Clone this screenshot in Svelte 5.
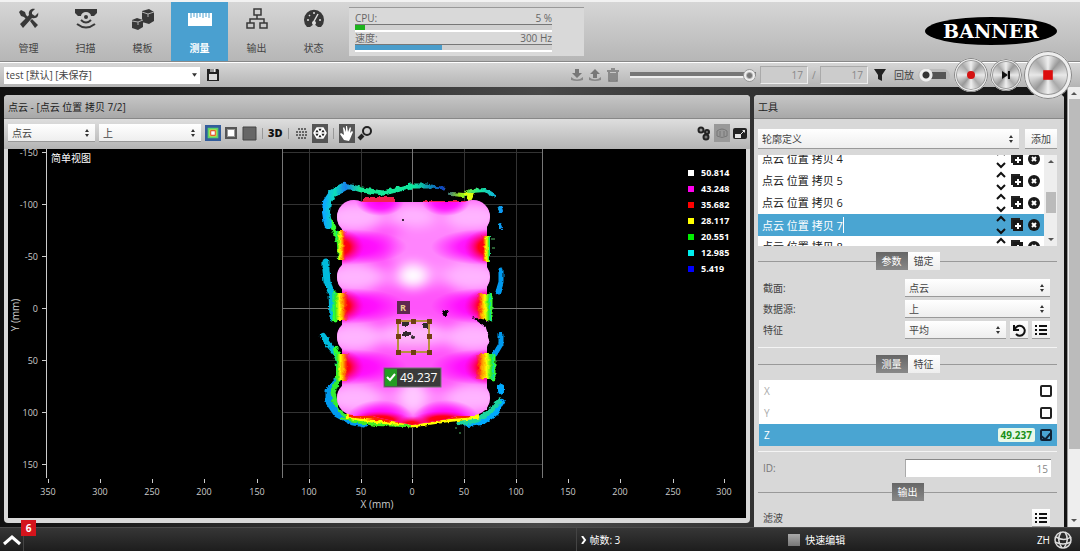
<script>
  const pages = ['管理', '扫描', '模板', '测量', '输出', '状态'];
  const tools = [4, 5, 6, 7, 8];
  const yTicks = [
    [152, '-150'], [204, '-100'], [256, '-50'], [308, '0'], [360, '50'], [412, '100'], [464, '150']
  ];
  const xTicks = [
    [48, '350'], [100, '300'], [152, '250'], [204, '200'], [257, '150'], [309, '100'], [361, '50'],
    [412, '0'], [464, '50'], [516, '100'], [568, '150'], [620, '200'], [673, '250'], [724, '300']
  ];
  const legend = [
    ['#ffffff', '50.814'], ['#f0e', '43.248'], ['#f00', '35.682'], ['#ff0', '28.117'],
    ['#0e0', '20.551'], ['#0ee', '12.985'], ['#00f', '5.419']
  ];
  const lobes = [217, 277, 337, 398];
  const notches = [[247, 18], [306, 18], [367, 18]];
  const handles = [[398, 321], [413, 321], [429, 321], [398, 336], [429, 336], [398, 352], [413, 352], [429, 352]];
  const axes = [['X', false], ['Y', false], ['Z', true]];
</script>

{#snippet pick(label, options, cls)}
  <span class="pick {cls}">
    <select aria-label={label}>
      {#each options as o}<option>{o}</option>{/each}
    </select>
    <svg viewBox="0 0 6 10" width="6" height="10" aria-hidden="true"><path d="M3 1l2 3H1zM3 9l2-3H1z" fill="#333" /></svg>
  </span>
{/snippet}

{#snippet listIcon()}
  <svg viewBox="0 0 14 14" width="14" height="14"><path d="M1 3h2M5 3h8M1 7h2M5 7h8M1 11h2M5 11h8" stroke="#111" stroke-width="2" /></svg>
{/snippet}

<div class="app">
  <header>
    <nav>
      {#each pages as p, i}
        <button class="page" class:active={i === 3}>
          <svg viewBox="0 0 24 24" width="24" height="24" fill="#383838">
            {#if i === 0}
              <path d="M4 3l4 2 1 3 4 4-2 2-4-4-3-1-2-4zM13 14l2-2 6 6-3 3z" />
              <path d="M21 6l-3 3-3-2 0-2 3-3c-4-1-7 2-6 6l-9 9 3 4 9-10c5 1 7-2 6-6z" />
            {:else if i === 1}
              <path d="M1 2h22v4l-3 3h-3a5 4 0 0 0-10 0H4L1 6z" />
              <circle cx="12" cy="10" r="2" />
              <path d="M7 13q5 5 10 0M3 17q9 7 18 0" fill="none" stroke="#383838" stroke-width="2" />
            {:else if i === 2}
              <path d="M11 4l7-2 5 3v9l-5 3-7-2zM1 13l5-2 6 2v7l-5 3-6-2z" />
              <path d="M11 5l6 2 6-2M17 7v3M1 14l6 1 5-2M7 15v3" fill="none" stroke="#b0b0b0" />
            {:else if i === 3}
              <path d="M0 6h24v13H0z" fill="#fff" />
              <path d="M3 6v5M6 6v4M9 6v5M12 6v4M15 6v5M18 6v4M21 6v5" stroke="#4aa0d0" />
            {:else if i === 4}
              <path d="M9 2h7v6H9zM2 16h7v5H2zM15 16h7v5h-7zM12 8v4M5 16v-4h14v4" fill="none" stroke="#383838" stroke-width="1.500" />
            {:else}
              <path d="M5 20a10 10 0 1 1 14 0l-3 0-4-3-4 3z" />
              <path d="M11 16l5-9M5 13h2M7 8l1 1M12 5v2M17 13h2" stroke="#ddd" stroke-width="1.500" />
              <circle cx="12" cy="16" r="2" fill="#ddd" />
            {/if}
          </svg>
          <span>{p}</span>
        </button>
      {/each}
    </nav>
    <div class="stats">
      <div class="stat"><span>CPU:</span><span>5 %</span></div>
      <div class="bar"><i class="green" style="width: 5%"></i></div>
      <div class="stat"><span>速度:</span><span>300 Hz</span></div>
      <div class="bar"><i class="blue" style="width: 44%"></i></div>
    </div>
    <svg class="logo" viewBox="0 0 132 30" width="132" height="30">
      <ellipse cx="66" cy="15" rx="66" ry="14" fill="#000" />
      <text x="66" y="22" text-anchor="middle" fill="#fff">BANNER</text>
    </svg>
  </header>

  <div class="toolbar">
    <span class="job">
      <select aria-label="作业"><option>test [默认] [未保存]</option></select>
      <svg viewBox="0 0 6 4" width="5" height="4" aria-hidden="true"><path d="M0 0h6l-3 4z" fill="#333" /></svg>
    </span>
    <button class="icon" aria-label="保存">
      <svg viewBox="0 0 14 14" width="14" height="14"><path d="M1 1h11l1 1v11H1z" fill="#222" /><path d="M3 6h8v6H3z" fill="#ddd" /><path d="M4 1h6v3H4z" fill="#999" /><path d="M8 1h1v3H8z" fill="#eee" /></svg>
    </button>
    <div class="playback">
      <button class="icon" aria-label="下载"><svg viewBox="0 0 14 14" width="14" height="14"><path d="M5 1h4v4h3L7 10 2 5h3z" fill="#777" /><path d="M1 9q6 5 12 0v3q-6 2-12 0z" fill="#888" /></svg></button>
      <button class="icon" aria-label="上传"><svg viewBox="0 0 14 14" width="14" height="14"><path d="M5 10h4V6h3L7 1 2 6h3z" fill="#777" /><path d="M1 9q6 5 12 0v3q-6 2-12 0z" fill="#888" /></svg></button>
      <button class="icon" aria-label="删除"><svg viewBox="0 0 14 14" width="14" height="14"><path d="M1 3h12M5 1h4M3 4v9h8V4M5 5v7M7 5v7M9 5v7" fill="none" stroke="#777" stroke-width="1.500" /></svg></button>
      <input class="seek" type="range" aria-label="帧" max="17" value="17" />
      <input class="num" aria-label="当前帧" value="17" /><span class="slash">/</span><input class="num" aria-label="总帧数" value="17" />
      <button class="icon filter" aria-label="过滤"><svg viewBox="0 0 14 14" width="14" height="14"><path d="M1 1h12L9 7v6l-4-2V7z" fill="#222" /></svg></button>
      <label class="replay">回放 <input type="checkbox" /></label>
      <button class="round" aria-label="录制"><svg viewBox="0 0 10 10" width="10" height="10"><circle cx="5" cy="5" r="4" fill="#d41212" /></svg></button>
      <button class="round small" aria-label="单步"><svg viewBox="0 0 10 10" width="10" height="10"><path d="M1 1l6 4-6 4zM7 1h2v8H7z" fill="#111" /></svg></button>
      <button class="round big" aria-label="停止"><svg viewBox="0 0 10 10" width="10" height="10"><path d="M1 1h8v8H1z" fill="#dc0d0d" /></svg></button>
    </div>
  </div>

  <main>
    <section class="panel view">
      <h2>点云 - [点云 位置 拷贝 7/2]</h2>
      <div class="viewbar">
        {@render pick('数据', ['点云'], 'data')}
        {@render pick('源', ['上'], 'source')}
        <div class="modes">
          <button class="icon" aria-label="热图"><svg viewBox="0 0 18 18" width="16" height="16"><path d="M0 0h18v18H0z" fill="#335d9c" /><path d="M3 3h12v12H3z" fill="#5bd36a" /><path d="M5 5h8v8H5z" fill="#f2df3a" /><path d="M6 6h6v6H6z" fill="#db3b2c" /><path d="M7 7h4v4H7z" fill="#fff" /></svg></button>
          <button class="icon" aria-label="灰度"><svg viewBox="0 0 16 16" width="16" height="16"><path d="M2 2h12v12H2z" fill="#555" /><path d="M4 4h8v8H4z" fill="#999" /><path d="M5 5h6v6H5z" fill="#fff" /></svg></button>
          <button class="icon" aria-label="均匀"><svg viewBox="0 0 16 16" width="16" height="16"><path d="M2 2h13v13H2z" fill="#666" stroke="#444" /></svg></button>
        </div>
        <i class="sep"></i>
        <button class="three">3D</button>
        <i class="sep"></i>
        <button class="icon" aria-label="点"><svg viewBox="0 0 16 16" width="16" height="16"><path d="M4 4h8M2 7h12M2 10h12M4 13h8" stroke="#444" stroke-width="1.500" stroke-dasharray="2 1" /></svg></button>
        <button class="icon on" aria-label="网格"><svg viewBox="0 0 16 16" width="16" height="16"><path d="M5 3h6l3 5-3 5H5L2 8zM5 3l6 10M11 3L5 13M2 8h12" fill="#222" stroke="#fff" stroke-width="1.500" /></svg></button>
        <i class="sep"></i>
        <button class="icon on" aria-label="平移"><svg viewBox="0 0 16 16" width="16" height="16"><path d="M5 15L1 9l1-1 3 2-1-7 1-1 2 5V1h1l1 6 2-5 1 1-1 5 2-2 1 1-3 7-1 2z" fill="#fff" /></svg></button>
        <button class="icon" aria-label="缩放"><svg viewBox="0 0 16 16" width="16" height="16"><circle cx="10" cy="6" r="4" fill="none" stroke="#222" stroke-width="2" /><path d="M6 10l-4 4" stroke="#222" stroke-width="4" /></svg></button>
        <div class="right">
          <button class="icon" aria-label="设置"><svg viewBox="0 0 16 16" width="16" height="16"><circle cx="5" cy="5" r="2.500" fill="#999" stroke="#222" stroke-width="2" /><circle cx="11" cy="7" r="2" fill="#777" stroke="#222" stroke-width="2" /><circle cx="10" cy="12" r="2.500" fill="#777" stroke="#222" stroke-width="2" /></svg></button>
          <button class="icon dim" aria-label="区域"><svg viewBox="0 0 16 16" width="16" height="16"><path d="M3 6q5-4 10 0v5q-5 3-10 0zM6 6v5M10 6v5" fill="none" stroke="#777" /></svg></button>
          <button class="icon" aria-label="窗口"><svg viewBox="0 0 16 16" width="16" height="16"><rect x="1" y="3" width="14" height="11" rx="2" fill="#222" /><path d="M3 9h6v4H3zM10 5h3v3z" fill="#e4e4e4" /><path d="M9 9l4-4" stroke="#e4e4e4" /></svg></button>
        </div>
      </div>
      <svg class="plot" viewBox="8 149 738 369" role="img" aria-label="简单视图">
        <defs>
          <filter id="soft" x="-50%" y="-50%" width="200%" height="200%"><feGaussianBlur stdDeviation="6" /></filter>
          <filter id="edge" x="-10%" y="-10%" width="120%" height="120%">
            <feTurbulence type="fractalNoise" baseFrequency="0.25" numOctaves="2" seed="4" />
            <feDisplacementMap in="SourceGraphic" scale="4" xChannelSelector="R" yChannelSelector="G" />
          </filter>
          <linearGradient id="bandL"><stop offset="0" stop-color="#0ad8c0" /><stop offset=".15" stop-color="#3e2" /><stop offset=".4" stop-color="#ff0" /><stop offset=".65" stop-color="#f80" /><stop offset="1" stop-color="#f00" stop-opacity="0" /></linearGradient>
          <linearGradient id="bandR" x1="1" x2="0"><stop offset="0" stop-color="#0ad8c0" /><stop offset=".15" stop-color="#3e2" /><stop offset=".4" stop-color="#ff0" /><stop offset=".65" stop-color="#f80" /><stop offset="1" stop-color="#f00" stop-opacity="0" /></linearGradient>
          <linearGradient id="halo" gradientUnits="userSpaceOnUse" x1="324" x2="504" y1="0" y2="0"><stop offset="0" stop-color="#08a8ff" /><stop offset=".06" stop-color="#0de0b8" /><stop offset=".12" stop-color="#1680f0" /><stop offset=".2" stop-color="#18e890" /><stop offset=".5" stop-color="#10e8a0" /><stop offset=".66" stop-color="#1040c0" /><stop offset=".76" stop-color="#a0f010" /><stop offset=".87" stop-color="#18e8a0" /><stop offset="1" stop-color="#0a90ff" /></linearGradient>
          <radialGradient id="red"><stop offset="0" stop-color="#f00" /><stop offset=".45" stop-color="#f00" stop-opacity=".9" /><stop offset="1" stop-color="#f0a" stop-opacity="0" /></radialGradient>
          <radialGradient id="mag"><stop offset="0" stop-color="#f0e" /><stop offset=".5" stop-color="#f0f" stop-opacity=".8" /><stop offset="1" stop-color="#f0f" stop-opacity="0" /></radialGradient>
          <clipPath id="body">
            <rect x="353" y="202" width="122" height="214" />
            <path d="M342 225h145v185H342zM345 408L380 418l32 7 35-6 32-10z" />
            {#each lobes as y}<circle cx="354" cy={y} r="17" /><circle cx="473" cy={y} r="17" />{/each}
          </clipPath>
        </defs>
        <rect x="8" y="149" width="738" height="369" fill="#000" />
        <g stroke="#333" fill="none" shape-rendering="crispEdges">
          <path d="M309.500 149V478M361.500 149V478M464.500 149V478M516.500 149V478M282 152.500H543M282 204.500H543M282 256.500H543M282 360.500H543M282 412.500H543M282 464.500H543" />
          <path d="M282.500 149V478M542.500 149V478M412.500 149V478M282 308.500H543" stroke="#777" />
        </g>

        <g fill="none" stroke-linecap="round" stroke-linejoin="round" filter="url(#edge)">
          <path d="M338 240L334 229L328 218" stroke="#3f3" stroke-width="5" />
          <path d="M328 225L326 212L327 202L333 193L344 187" stroke="url(#halo)" stroke-width="8" />
          <path d="M341 187L352 187L362 190L383 193L400 189L411 186L428 186" stroke="url(#halo)" stroke-width="5" />
          <path d="M430 187L444 188" stroke="url(#halo)" stroke-width="3" />
          <path d="M451 194L464 195L471 191L485 190L495 196M500 208l1 3M500 225l1 2" stroke="url(#halo)" stroke-width="4" />
          <path d="M326 262V270L327 282L332 294L333 318" stroke="#0bd" stroke-width="7" />
          <path d="M335 294V320" stroke="#3f3" stroke-width="5" />
          <path d="M323 336L330 346L338 356" stroke="#0bd" stroke-width="6" />
          <path d="M336 350L339 362V378" stroke="#3f3" stroke-width="6" />
          <path d="M501 270L501 282L498 292" stroke="#09e" stroke-width="5" />
          <path d="M501 335L501 344L495 354" stroke="#09e" stroke-width="5" />
          <path d="M493 356V378M490 296V318" stroke="#3f3" stroke-width="5" />
          <path d="M336 382L329 391V402L337 414L350 421L364 424" stroke="#09e" stroke-width="7" />
          <path d="M338 380L333 392L335 402L344 414L358 421L400 424" stroke="#3e3" stroke-width="5" />
          <path d="M501 387v4M502 402L494 414L482 422L468 424" stroke="#0af" stroke-width="6" />
          <path d="M499 401L490 412L477 420L460 423" stroke="#1ed6a0" stroke-width="5" />
        </g>
        <g filter="url(#edge)">
          <path d="M363 197h32v8h-32zM423 201h46v5h-46z" fill="#f02050" />
          <path d="M463 193h12l-4 8h-3l-1-6h-4z" fill="#df1" />
          <path d="M338 383V408L352 418L412 428L470 419L488 408V383" fill="#000" />
          <path d="M346 416L380 420L412 424L445 419L479 415" fill="none" stroke="#ff0" stroke-width="7" />
          <path d="M350 414L380 417L412 421L445 416L470 414" fill="none" stroke="#f20" stroke-width="7" />
          <path d="M340 418L375 425L410 426" fill="none" stroke="#4e2" stroke-width="2" />
        </g>
        <g clip-path="url(#body)">
          <rect x="330" y="195" width="170" height="235" fill="#ff54fa" />
          <g filter="url(#soft)" fill="#ffb4ff">
            {#each lobes as y}
              <ellipse cx="354" cy={y} rx="28" ry="15" /><ellipse cx="473" cy={y} rx="28" ry="15" />
              <ellipse cx="413" cy={y} rx="50" ry="10" opacity=".6" />
            {/each}
            <ellipse cx="430" cy="250" rx="42" ry="26" opacity=".5" />
            <ellipse cx="413" cy="215" rx="22" ry="12" />
            <ellipse cx="413" cy="276" rx="14" ry="12" fill="#fff" />
            <ellipse cx="413" cy="334" rx="34" ry="12" />
            <ellipse cx="413" cy="397" rx="14" ry="18" fill="#ffc8ff" />
          </g>
          <ellipse cx="380" cy="202" rx="24" ry="14" fill="url(#mag)" />
          <ellipse cx="446" cy="202" rx="24" ry="14" fill="url(#mag)" />
          {#each notches as [y, r]}
            <ellipse cx="345" cy={y} rx="62" ry={r} fill="url(#mag)" />
            <ellipse cx="485" cy={y} rx="54" ry={r} fill="url(#mag)" />
            <ellipse cx="338" cy={y} rx="26" ry={r} fill="url(#red)" />
            <ellipse cx="490" cy={y} rx="26" ry={r} fill="url(#red)" />
          {/each}
          <ellipse cx="380" cy="420" rx="34" ry="20" fill="url(#mag)" />
          <ellipse cx="446" cy="420" rx="34" ry="20" fill="url(#mag)" />
          <ellipse cx="380" cy="420" rx="30" ry="9" fill="url(#red)" />
          <ellipse cx="412" cy="426" rx="20" ry="10" fill="url(#red)" />
          <ellipse cx="443" cy="420" rx="30" ry="9" fill="url(#red)" />
        </g>
        <g filter="url(#edge)">
          <path d="M336 231h10q-3 15 0 29h-8z" fill="url(#bandL)" /><path d="M490 236h-8q3 12 0 25h8z" fill="url(#bandR)" />
          <path d="M333 293h16q-5 13 0 27h-14z" fill="url(#bandL)" /><path d="M491 294h-15q5 13 0 26h15z" fill="url(#bandR)" />
          <path d="M335 354h14q-4 13 0 26h-12z" fill="url(#bandL)" /><path d="M494 354h-19q6 12 0 25h19z" fill="url(#bandR)" />
        </g>
        <g fill="#000" filter="url(#edge)">
          <path d="M471 317l16 3 6 10v14l-6 8 3-12-4-12-9-7z" />
          <circle cx="445" cy="313" r="3" /><path d="M402 321h7v5h-7zM402 332h9v4h-9zM423 323h7v5h-7z" /><circle cx="413" cy="337" r="2" />
        </g>
        <circle cx="403" cy="220" r="1" />
        <path d="M491 239h4M492 248h3M455 428h2M459 433h2" stroke="#5b6" />

        <rect x="398" y="321" width="31" height="31" fill="#f5d5e5" fill-opacity=".2" stroke="#b89040" stroke-width="2" />
        {#each handles as [x, y]}<rect x={x - 2} y={y - 2} width="5" height="5" fill="#704010" />{/each}
        <rect x="397" y="301" width="13" height="13" fill="#602850" />
        <text x="403" y="311" text-anchor="middle" class="roi">R</text>
        <rect x="384" y="368" width="57" height="19" fill="#3a3a3a" stroke="#777" />
        <rect x="385" y="369" width="12" height="17" fill="#249c24" />
        <path d="M387 377l3 3 5-6" fill="none" stroke="#fff" stroke-width="2" />
        <text x="400" y="382" class="value">49.237</text>

        <path d="M46.500 149V478" stroke="#ccc" />
        {#each yTicks as [y, t]}
          <path d="M42 {y}.5h4" stroke="#ccc" /><text x="38" y={y + 4} text-anchor="end">{t}</text>
        {/each}
        {#each xTicks as [x, t]}
          <path d="M{x}.5 479v4" stroke="#ccc" /><text x={x} y="495" text-anchor="middle">{t}</text>
        {/each}
        <text x="377" y="508" text-anchor="middle" class="axis">X (mm)</text>
        <text transform="translate(19 315) rotate(-90)" text-anchor="middle" class="axis">Y (mm)</text>
        <text x="51" y="162" class="name">简单视图</text>
        {#each legend as [c, t], i}
          <rect x="688" y={170 + i * 16} width="6" height="6" fill={c} /><text x="701" y={176 + i * 16} class="key">{t}</text>
        {/each}
      </svg>
    </section>

    <section class="panel tools">
      <h2>工具</h2>
      <div class="body">
        <div class="add">{@render pick('工具类型', ['轮廓定义'], 'wide')}<button class="plain">添加</button></div>
        <div class="toolbox">
          <ul>
            {#each tools as n}
              <li class:chosen={n === 7}>
                {#if n === 7}<input aria-label="工具名称" value="点云 位置 拷贝 7" />{:else}<span>点云 位置 拷贝 {n}</span>{/if}
                <button class="icon" aria-label="移动"><svg viewBox="0 0 10 20" width="10" height="20"><path d="M1 6l4-4 4 4M1 14l4 4 4-4" fill="none" stroke="#111" stroke-width="2" /></svg></button>
                <button class="icon" aria-label="复制"><svg viewBox="0 0 12 14" width="12" height="14"><path d="M1 11V1h8" fill="none" stroke="#222" stroke-width="2" /><path d="M2 2h10v11H2z" fill="#181818" /><path d="M7 5v6M4 8h6" stroke="#fff" stroke-width="2" /></svg></button>
                <button class="icon" aria-label="移除"><svg viewBox="0 0 12 12" width="12" height="12"><circle cx="6" cy="6" r="6" fill="#181818" /><path d="M4 4l4 4M8 4l-4 4" stroke="#fff" stroke-width="2" /></svg></button>
              </li>
            {/each}
          </ul>
          <div class="scroll"><i class="up"></i><i class="thumb"></i><i class="down"></i></div>
        </div>

        <div class="tabs"><button class="on">参数</button><button>锚定</button></div>
        <div class="form">
          <span>截面:</span>{@render pick('截面', ['点云'], 'field')}
          <span>数据源:</span>{@render pick('数据源', ['上'], 'field')}
          <span>特征</span>
          <div class="feature">
            {@render pick('特征', ['平均'], 'wide')}
            <button class="plain sq" aria-label="重置"><svg viewBox="0 0 14 14" width="14" height="14"><path d="M2 2v5h5M3 6a5 5 0 1 1 1 5" fill="none" stroke="#111" stroke-width="2" /></svg></button>
            <button class="plain sq" aria-label="列表">{@render listIcon()}</button>
          </div>
        </div>
        <hr />
        <div class="tabs"><button class="on">测量</button><button>特征</button></div>
        <ul class="axes">
          {#each axes as [a, on]}
            <li class:chosen={on}>
              <label for="axis-{a}">{a}</label>
              {#if on}<output>49.237</output>{/if}
              <input id="axis-{a}" type="checkbox" checked={on} />
            </li>
          {/each}
        </ul>
        <hr />
        <div class="ident"><label for="ident">ID:</label><input id="ident" value="15" /></div>
        <div class="tabs single"><button class="on">输出</button></div>
        <div class="last"><span>滤波</span><button class="plain sq" aria-label="滤波列表">{@render listIcon()}</button></div>
      </div>
    </section>
    <div class="scroll page-scroll"><i class="up"></i><i class="thumb"></i><i class="down"></i></div>
  </main>

  <footer>
    <button class="log" aria-label="日志">
      <svg viewBox="0 0 20 12" width="20" height="12"><path d="M2 10l8-7 8 7" fill="none" stroke="#fff" stroke-width="3" /></svg>
      <b>6</b>
    </button>
    <div class="frames">
      <svg viewBox="0 0 6 8" width="6" height="8"><path d="M1 0l3 4-3 4" fill="none" stroke="#fff" stroke-width="2" /></svg>
      帧数: 3
    </div>
    <label class="quick"><input type="checkbox" />快速编辑</label>
    <button class="lang">ZH
      <svg viewBox="0 0 18 18" width="18" height="18" fill="none" stroke="#ddd" stroke-width="1.500"><circle cx="9" cy="9" r="8" /><path d="M2 6q8 5 15 0M1 11q8 4 16 0M7 1q-5 8 1 16M11 1q5 8-1 16" /></svg>
    </button>
  </footer>
</div>

<style>
  :global(body) { margin: 0; background: #222; }
  * { box-sizing: border-box; }
  .app {
    min-height: 100vh; display: flex; flex-direction: column; overflow: hidden; color: #444;
    font: 10px/14px "Open Sans", "Noto Sans CJK SC", sans-serif;
    background: linear-gradient(90deg, #111, #484848 50%, #111);
  }
  button, input, select { font: inherit; color: inherit; margin: 0; }
  button { border: 0; padding: 0; background: none; cursor: pointer; }
  svg { display: block; flex: none; }
  ul { list-style: none; margin: 0; padding: 0; }

  header {
    height: 62px; display: flex; align-items: stretch; border-top: 2px solid #f2f2f2; border-bottom: 1px solid #888;
    background: linear-gradient(#d6d6d6, #b6b6b6);
  }
  nav { display: flex; }
  .page { width: 57px; display: flex; flex-direction: column; align-items: center; gap: 10px; padding-top: 5px; }
  .page.active { background: #4aa0d0; color: #fff; font-weight: bold; }
  .stats { align-self: center; width: 235px; margin-left: 7px; padding: 4px 32px 4px 6px; background: #d9d9d9; border-top: 1px solid #999; }
  .stat { display: flex; justify-content: space-between; line-height: 12px; color: #666; }
  .bar { height: 8px; border-top: 1px solid #777; border-bottom: 2px solid #fff; background: #d0d0d0; }
  .bar i { display: block; height: 5px; }
  .green { background: #1db31d; }
  .blue { background: #4a9dcb; }
  .logo { margin: 14px 23px 0 auto; }
  .logo text { font: bold 19px "DejaVu Serif", serif; }

  .toolbar {
    height: 25px; display: flex; align-items: center; gap: 6px; padding-left: 4px; position: relative; z-index: 1;
    border-top: 1px solid #fff; background: linear-gradient(#d6d6d6, #b4b4b4);
  }
  .icon { display: inline-flex; align-items: center; justify-content: center; }
  .job { display: flex; align-items: center; width: 196px; height: 17px; background: #fff; padding-right: 3px; }
  .job select { appearance: none; flex: 1; border: 0; padding: 0 2px; background: none; }
  .playback { display: flex; align-items: center; margin-left: auto; gap: 4px; padding-right: 8px; height: 0; }
  .seek { appearance: none; width: 126px; height: 14px; margin-left: 6px; background: linear-gradient(transparent 4px, #777 4px, #777 8px, #eee 8px, #eee 10px, transparent 10px); }
  .seek::-webkit-slider-thumb { appearance: none; width: 13px; height: 13px; border-radius: 50%; border: 1px solid #999; background: radial-gradient(#777 0 2px, #eee 4px); }
  .num { width: 48px; height: 18px; border: 1px solid #aaa; border-right-color: #eee; border-bottom-color: #eee; background: #ccc; color: #888; text-align: right; padding: 0 4px; }
  .num:first-of-type { margin-left: 3px; }
  .slash { width: 4px; color: #888; }
  .filter { margin: 0 3px 0 1px; }
  .replay { display: flex; align-items: center; gap: 4px; }
  .replay input { appearance: none; width: 32px; height: 13px; border-radius: 7px; background: radial-gradient(circle at 8px 6px, #333 0 3px, #eee 4px 6px, transparent 7px), linear-gradient(#555, #555) 12px 3px / 16px 7px no-repeat, #bbb; }
  .round {
    flex: none; width: 34px; height: 34px; border-radius: 50%; display: grid; place-items: center;
    border: 2px solid #eee; outline: 1px solid #888; outline-offset: -1px; box-shadow: inset 0 0 0 1px #999;
    background: conic-gradient(#eee, #999 40deg, #e8e8e8 90deg, #aaa 140deg, #f0f0f0 180deg, #999 220deg, #e8e8e8 270deg, #aaa 320deg, #eee);
  }
  .round.small { width: 32px; height: 32px; margin: 0 -2px; }
  .round.big { width: 48px; height: 48px; border-width: 4px; }
  .round.big svg { width: 12px; height: 12px; }

  main { flex: 1; display: flex; align-items: stretch; padding: 8px 0 4px 4px; }
  .panel { border-radius: 4px; overflow: hidden; background: #d8d8d8; }
  h2 { margin: 0; height: 24px; padding-left: 4px; font: inherit; line-height: 24px; color: #222; background: linear-gradient(#c6c6c6, #a8a8a8); border-bottom: 1px solid #888; }
  .view { flex: 1; min-width: 0; padding-bottom: 4px; }
  .viewbar { height: 30px; display: flex; align-items: center; padding: 0 2px 2px 4px; gap: 2px; background: linear-gradient(#dedede, #b4b4b4); }
  .pick { display: flex; align-items: center; height: 18px; padding-right: 5px; background: linear-gradient(#fff, #eee); border-bottom: 1px solid #999; }
  .pick select { appearance: none; flex: 1; min-width: 0; border: 0; padding: 0 4px; background: none; }
  .data { width: 87px; }
  .source { width: 102px; margin: 0 2px; }
  .modes { display: flex; gap: 2px; }
  .sep { width: 1px; height: 11px; margin: 0 3px; background: #999; }
  .three { font-size: 11px; font-weight: 800; color: #111; }
  .icon.on { height: 19px; background: #555; }
  .icon.dim { height: 18px; background: #999; }
  .right { display: flex; align-items: center; gap: 2px; margin-left: auto; }
  .plot { width: calc(100% - 8px); height: auto; margin: 0 4px; }
  .plot text { font-size: 9px; fill: #ccc; }
  .plot .axis { font-size: 10px; }
  .plot .name { font-size: 10px; fill: #fff; }
  .plot .key { font-weight: bold; fill: #fff; }
  .plot .value { font-size: 12px; fill: #fff; }
  .plot .roi { font-weight: bold; fill: #e8d090; }

  .tools { width: 310px; margin: 0 3px -4px 4px; border-radius: 4px 4px 0 0; }
  .body { padding: 10px 7px 0 4px; }
  .add { display: flex; gap: 6px; }
  .wide { flex: 1; }
  .add .pick, .add .plain { height: 20px; }
  .plain { width: 32px; background: linear-gradient(#fff, #eee); border-bottom: 1px solid #999; }
  .plain.sq { width: 18px; height: 18px; display: grid; place-items: center; }
  .toolbox { display: flex; height: 91px; margin: 6px 0; overflow: hidden; background: #fff; }
  .toolbox ul { flex: 1; margin-top: -7px; }
  .toolbox li { height: 22px; display: flex; align-items: center; gap: 5px; padding: 0 4px; font-size: 11px; color: #222; }
  .toolbox li button:first-of-type { margin-left: auto; }
  .toolbox li input { field-sizing: content; border: 0; border-right: 1px solid #fff; padding: 0; height: 16px; background: none; color: #fff; outline: 0; }
  .chosen { background: #4aa5d2; }
  .scroll { width: 13px; display: flex; flex-direction: column; align-items: center; background: #eee; padding: 5px 0; }
  .up { border: 3px solid transparent; border-top: 0; border-bottom: 3px solid #555; }
  .down { border: 3px solid transparent; border-bottom: 0; border-top: 3px solid #555; margin-top: auto; }
  .thumb { width: 10px; height: 21px; margin-top: 29px; background: #bbb; }
  .tabs { display: flex; justify-content: center; background: linear-gradient(#999, #999) 0 9px / 100% 1px no-repeat; }
  .tabs button { width: 32px; height: 18px; background: linear-gradient(#fff, #eee); }
  .tabs .on { background: linear-gradient(#666, #888); color: #fff; }
  .form { display: grid; grid-template-columns: 1fr 145px; gap: 3px 0; align-items: center; padding: 9px 7px 8px 5px; }
  .feature { display: flex; gap: 4px; }
  hr { border: 0; border-top: 1px solid #f4f4f4; margin: 0 0 7px; }
  .axes { margin: 7px 0 5px 1px; background: #fff; }
  .axes li { display: flex; align-items: center; height: 22px; padding: 0 5px; gap: 5px; }
  .axes label { flex: 1; color: #aaa; }
  .axes .chosen label { color: #fff; }
  .axes output { padding: 0 3px; border-radius: 2px; background: #e8f8e8; color: #189018; font-weight: bold; }
  .axes input { appearance: none; width: 12px; height: 12px; border: 2px solid #222; border-radius: 2px; }
  .axes input:checked { border-color: #123; display: grid; place-items: start center; }
  .axes input:checked::after { content: ""; width: 4px; height: 7px; border: solid #123; border-width: 0 2px 2px 0; transform: rotate(40deg); }
  .ident { display: flex; justify-content: space-between; align-items: center; padding: 0 6px 0 5px; }
  .ident label { color: #777; }
  .ident input { width: 146px; height: 18px; border: 0; border-top: 1px solid #888; border-left: 1px solid #aaa; padding: 0 3px; background: #fff; text-align: right; color: #888; }
  .single { margin-top: 6px; }
  .last { display: flex; justify-content: space-between; align-items: center; padding: 8px 7px 0 5px; }
  .page-scroll { margin: -8px 0 -4px auto; padding: 5px 0; border-left: 1px solid #999; }
  .page-scroll .thumb { width: 11px; flex: 1; margin: 4px 0 70px; }
  .page-scroll .down { margin-top: 0; }

  footer { height: 25px; display: flex; align-items: center; color: #fff; border-top: 1px solid #4c4c4c; background: linear-gradient(#363636, #1c1c1c); }
  .log { position: relative; width: 24px; height: 24px; padding-left: 2px; border-right: 1px solid #444; }
  .log b { position: absolute; left: 21px; top: -8px; width: 15px; height: 16px; line-height: 16px; background: #d4141c; color: #fff; }
  .frames { display: flex; align-items: center; gap: 2px; margin-left: calc(53% - 20px); padding-left: 4px; height: 24px; border-left: 1px solid #444; }
  .quick { display: flex; align-items: center; gap: 5px; margin-left: 168px; }
  .quick input { appearance: none; width: 12px; height: 12px; background: linear-gradient(#aaa, #777); }
  .lang { display: flex; align-items: center; gap: 4px; margin-left: auto; padding-right: 8px; }
</style>
